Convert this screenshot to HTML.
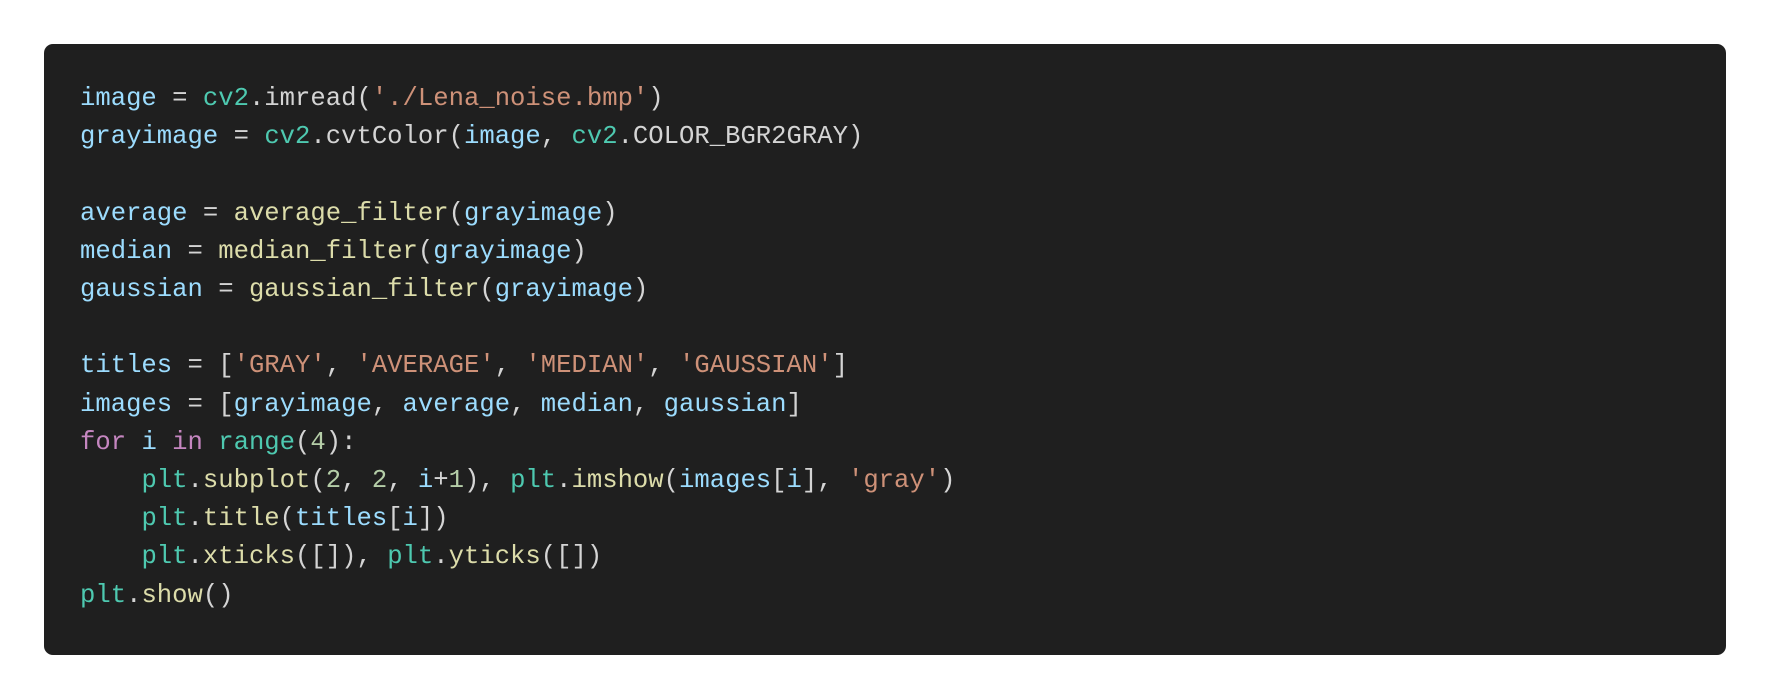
<!DOCTYPE html>
<html><head><meta charset="utf-8"><style>
html,body{margin:0;padding:0;background:#fff;width:1770px;height:700px;overflow:hidden}
.box{position:absolute;left:44px;top:44px;width:1682px;height:611px;background:#1f1f1f;border-radius:9px}
pre{position:absolute;left:36px;top:36px;margin:0;font-family:"Liberation Mono",monospace;font-size:25.6px;line-height:38.2px;color:#d4d4d4;white-space:pre}
.v{color:#9cdcfe}.t{color:#4ec9b0}.f{color:#dcdcaa}.s{color:#ce9178}.k{color:#c586c0}.n{color:#b5cea8}
</style></head><body>
<div class="box"><pre><span class="v">image</span> = <span class="t">cv2</span>.imread(<span class="s">'./Lena_noise.bmp'</span>)
<span class="v">grayimage</span> = <span class="t">cv2</span>.cvtColor(<span class="v">image</span>, <span class="t">cv2</span>.COLOR_BGR2GRAY)

<span class="v">average</span> = <span class="f">average_filter</span>(<span class="v">grayimage</span>)
<span class="v">median</span> = <span class="f">median_filter</span>(<span class="v">grayimage</span>)
<span class="v">gaussian</span> = <span class="f">gaussian_filter</span>(<span class="v">grayimage</span>)

<span class="v">titles</span> = [<span class="s">'GRAY'</span>, <span class="s">'AVERAGE'</span>, <span class="s">'MEDIAN'</span>, <span class="s">'GAUSSIAN'</span>]
<span class="v">images</span> = [<span class="v">grayimage</span>, <span class="v">average</span>, <span class="v">median</span>, <span class="v">gaussian</span>]
<span class="k">for</span> <span class="v">i</span> <span class="k">in</span> <span class="t">range</span>(<span class="n">4</span>):
    <span class="t">plt</span>.<span class="f">subplot</span>(<span class="n">2</span>, <span class="n">2</span>, <span class="v">i</span>+<span class="n">1</span>), <span class="t">plt</span>.<span class="f">imshow</span>(<span class="v">images</span>[<span class="v">i</span>], <span class="s">'gray'</span>)
    <span class="t">plt</span>.<span class="f">title</span>(<span class="v">titles</span>[<span class="v">i</span>])
    <span class="t">plt</span>.<span class="f">xticks</span>([]), <span class="t">plt</span>.<span class="f">yticks</span>([])
<span class="t">plt</span>.<span class="f">show</span>()</pre></div>
</body></html>
